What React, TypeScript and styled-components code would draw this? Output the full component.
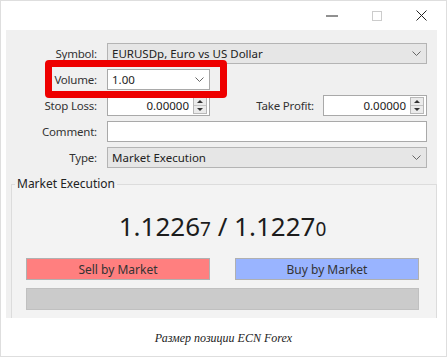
import styled, { createGlobalStyle } from 'styled-components'

const GlobalStyle = createGlobalStyle`
  html, body {
    margin: 0;
    padding: 0;
    background: #fff;
  }
  body {
    font-family: "Noto Sans", "Open Sans", sans-serif;
    font-size: 11.5px;
    color: #222;
  }
`

const Frame = styled.div`
  width: 447px;
  height: 357px;
  box-sizing: border-box;
  border: 1px solid #dedede;
  background: #fff;
  display: flex;
  flex-direction: column;
`

const TitleBar = styled.div`
  height: 29px;
  display: flex;
  justify-content: flex-end;
  align-items: center;
  padding-right: 2px;
`

const TitleButton = styled.div`
  width: 45px;
  height: 20px;
  display: flex;
  align-items: center;
  justify-content: center;
`

const Dialog = styled.div`
  position: relative;
  margin-left: 5px;
  width: 431px;
  height: 288px;
  background: #f0f0f0;
  box-sizing: border-box;
  padding: 13px 10px 0 0;
  overflow: hidden;
  display: flex;
  flex-direction: column;
`

const Form = styled.div`
  display: grid;
  grid-template-columns: 91px 1fr;
  column-gap: 10px;
  row-gap: 5px;
  grid-auto-rows: 21px;
`

const Label = styled.label`
  justify-self: end;
  align-self: center;
  color: #333;
  white-space: nowrap;
  letter-spacing: -0.2px;
`

const Field = styled.div<{ $grey?: boolean; $width?: number }>`
  box-sizing: border-box;
  height: 100%;
  width: ${p => (p.$width ? `${p.$width}px` : '100%')};
  border: 1px solid ${p => (p.$grey ? '#b4b4b4' : '#a9a9a9')};
  background: ${p => (p.$grey ? '#e6e6e6' : '#fff')};
  display: flex;
  align-items: center;
  padding: 0 4px 0 4px;
  color: #222;
  white-space: nowrap;
`

const FieldText = styled.span<{ $right?: boolean }>`
  flex: 1;
  text-align: ${p => (p.$right ? 'right' : 'left')};
  padding-right: ${p => (p.$right ? '4px' : '0')};
`

const Chevron = () => (
  <svg width="9" height="5" viewBox="0 0 9 5" style={{ flex: 'none', marginRight: 1 }}>
    <path d="M0.5 0.5 L4.5 4.5 L8.5 0.5" fill="none" stroke="#666" strokeWidth="1" />
  </svg>
)

const SpinBox = styled.div`
  flex: none;
  width: 12px;
  height: 15px;
  border: 1px solid #b8b8b8;
  background: #ebebeb;
  display: flex;
  flex-direction: column;
  margin-right: -2px;
  & > div {
    flex: 1;
    display: flex;
    align-items: center;
    justify-content: center;
  }
  & > div + div {
    border-top: 1px solid #c4c4c4;
  }
`

const Spinner = () => (
  <SpinBox>
    <div>
      <svg width="6" height="3" viewBox="0 0 6 3">
        <path d="M0 3 L3 0 L6 3 Z" fill="#333" />
      </svg>
    </div>
    <div>
      <svg width="6" height="3" viewBox="0 0 6 3">
        <path d="M0 0 L3 3 L6 0 Z" fill="#333" />
      </svg>
    </div>
  </SpinBox>
)

const SplitRow = styled.div`
  display: flex;
  align-items: center;
  height: 100%;
`

const InlineLabel = styled.label`
  margin-left: auto;
  margin-right: 9px;
  color: #333;
  letter-spacing: -0.2px;
`

const Highlight = styled.div`
  position: absolute;
  left: 39px;
  top: 30px;
  width: 182px;
  height: 38px;
  box-sizing: border-box;
  border: 7px solid #ee0000;
  border-radius: 4px;
  pointer-events: none;
`

const Group = styled.fieldset`
  margin: 8px -10px 0 5px;
  padding: 0 17px 0 14px;
  border: 1px solid #dcdcdc;
  border-bottom: none;
  background: #f3f3f3;
  min-inline-size: 0;
  flex: 1;
  display: flex;
  flex-direction: column;
`

const Legend = styled.legend`
  margin-left: -11px;
  padding: 0 2px;
  color: #222;
  font-size: 12px;
  line-height: 16px;
`

const Price = styled.div`
  margin-top: 17px;
  height: 34px;
  display: flex;
  align-items: baseline;
  justify-content: center;
  font-size: 26px;
  color: #1c1c1c;
  line-height: 34px;
`

const Pip = styled.span`
  font-size: 19px;
`

const Buttons = styled.div`
  margin-top: 15px;
  display: grid;
  grid-template-columns: 1fr 1fr;
  column-gap: 25px;
`

const TradeButton = styled.div<{ $color: string }>`
  height: 22px;
  box-sizing: border-box;
  border: 1px solid #b0b0b0;
  background: ${p => p.$color};
  display: flex;
  align-items: center;
  justify-content: center;
  color: #333;
  font-size: 12px;
`

const Bar = styled.div`
  margin-top: 8px;
  height: 22px;
  box-sizing: border-box;
  border: 1px solid #c0c0c0;
  background: #cbcbcb;
`

const Caption = styled.div`
  flex: 1;
  display: flex;
  align-items: center;
  justify-content: center;
  font-family: "Liberation Serif", serif;
  font-style: italic;
  font-size: 12px;
  color: #222;
  padding-top: 2px;
`

export default function App() {
  return (
    <>
      <GlobalStyle />
      <Frame>
        <TitleBar>
          <TitleButton>
            <svg width="12" height="2" viewBox="0 0 12 2">
              <path d="M0 1 H12" stroke="#222" strokeWidth="1" />
            </svg>
          </TitleButton>
          <TitleButton>
            <svg width="10" height="10" viewBox="0 0 10 10">
              <rect x="0.5" y="0.5" width="9" height="9" fill="none" stroke="#ccc" strokeWidth="1" />
            </svg>
          </TitleButton>
          <TitleButton>
            <svg width="11" height="11" viewBox="0 0 11 11">
              <path d="M0.5 0.5 L10.5 10.5 M10.5 0.5 L0.5 10.5" stroke="#222" strokeWidth="1" />
            </svg>
          </TitleButton>
        </TitleBar>
        <Dialog>
          <Form>
            <Label>Symbol:</Label>
            <Field $grey>
              <FieldText>EURUSDp, Euro vs US Dollar</FieldText>
              <Chevron />
            </Field>

            <Label>Volume:</Label>
            <Field $width={103}>
              <FieldText>1.00</FieldText>
              <Chevron />
            </Field>

            <Label>Stop Loss:</Label>
            <SplitRow>
              <Field $width={103}>
                <FieldText $right>0.00000</FieldText>
                <Spinner />
              </Field>
              <InlineLabel>Take Profit:</InlineLabel>
              <Field $width={104}>
                <FieldText $right>0.00000</FieldText>
                <Spinner />
              </Field>
            </SplitRow>

            <Label>Comment:</Label>
            <Field />

            <Label>Type:</Label>
            <Field $grey>
              <FieldText>Market Execution</FieldText>
              <Chevron />
            </Field>
          </Form>
          <Highlight />

          <Group>
            <Legend>Market Execution</Legend>
            <Price>
              1.1226<Pip>7</Pip>&nbsp;/&nbsp;1.1227<Pip>0</Pip>
            </Price>
            <Buttons>
              <TradeButton $color="#ff7f7f">Sell by Market</TradeButton>
              <TradeButton $color="#99b4ff">Buy by Market</TradeButton>
            </Buttons>
            <Bar />
          </Group>
        </Dialog>
        <Caption>Размер позиции ECN Forex</Caption>
      </Frame>
    </>
  )
}
